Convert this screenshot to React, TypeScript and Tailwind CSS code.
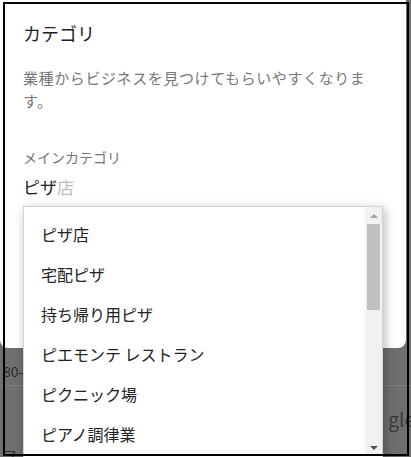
import React from "react";

const items = [
  "ピザ店",
  "宅配ピザ",
  "持ち帰り用ピザ",
  "ピエモンテ レストラン",
  "ピクニック場",
  "ピアノ調律業",
  "ピアノ教室",
];

export default function App() {
  const font = {
    fontFamily: '"Noto Sans CJK JP", "Noto Sans", sans-serif',
  };
  return (
    <div
      className="relative w-[411px] h-[457px] overflow-hidden bg-[#6f6f6f]"
      style={font}
    >
      {/* dialog */}
      <div className="w-[406px] h-[348px] bg-white rounded-b-[8px] pl-[23px] pt-[20px] flex flex-col">
        <div className="text-[18px] leading-[26px] text-[#222]">カテゴリ</div>
        <div className="mt-[20px] text-[15px] leading-[23px] text-[#777] tracking-[0.6px] w-[370px]">
          業種からビジネスを見つけてもらいやすくなります。
        </div>
        <div className="mt-[35px] text-[14px] leading-[20px] text-[#757575]">
          メインカテゴリ
        </div>
        <div className="mt-[8px] text-[17px] leading-[24px] text-[#222]">
          ピザ<span className="text-[#bdbdbd]">店</span>
        </div>
      </div>

      {/* dimmed page below */}
      <div className="flex flex-col">
        <div className="h-[37px] flex items-center pt-[10px] pl-[3px] text-[14px] text-[#2c2c2c]">
          <span>80-4</span>
        </div>
        <div className="h-px bg-[#7f7f7f]" />
        <div className="h-[45px] flex justify-end items-end text-[19px] text-[#3a3a3a] leading-[24px]">
          <span className="mr-[-4px]">gle</span>
        </div>
        <div className="pl-[3px] pt-[15px] text-[14px] text-[#2c2c2c] leading-[18px]">
          フェ
        </div>
      </div>

      {/* dropdown list */}
      <div className="absolute left-[23px] top-[206px] w-[360px] h-[270px] bg-white border border-[#d3d3d3] shadow-[2px_3px_10px_rgba(0,0,0,0.28)] flex">
        <div className="flex-1 pt-[7px]">
          {items.map((t) => (
            <div
              key={t}
              className="h-[40px] flex items-center pl-[17px] text-[16px] text-[#222]"
            >
              {t}
            </div>
          ))}
        </div>
        <div className="w-[17px] h-[249px] bg-[#f1f1f1] flex flex-col items-center">
          <div className="h-[17px] flex items-center justify-center">
            <div className="w-0 h-0 border-l-[4px] border-r-[4px] border-b-[4px] border-l-transparent border-r-transparent border-b-[#a3a3a3]" />
          </div>
          <div className="w-[13px] h-[86px] bg-[#c1c1c1]" />
          <div className="flex-1" />
          <div className="h-[17px] flex items-center justify-center">
            <div className="w-0 h-0 border-l-[4px] border-r-[4px] border-t-[4px] border-l-transparent border-r-transparent border-t-[#505050]" />
          </div>
        </div>
      </div>

      {/* black screenshot frame */}
      <div className="absolute left-[3px] top-[2px] w-[406px] h-[454px] border-2 border-black pointer-events-none" />
    </div>
  );
}
